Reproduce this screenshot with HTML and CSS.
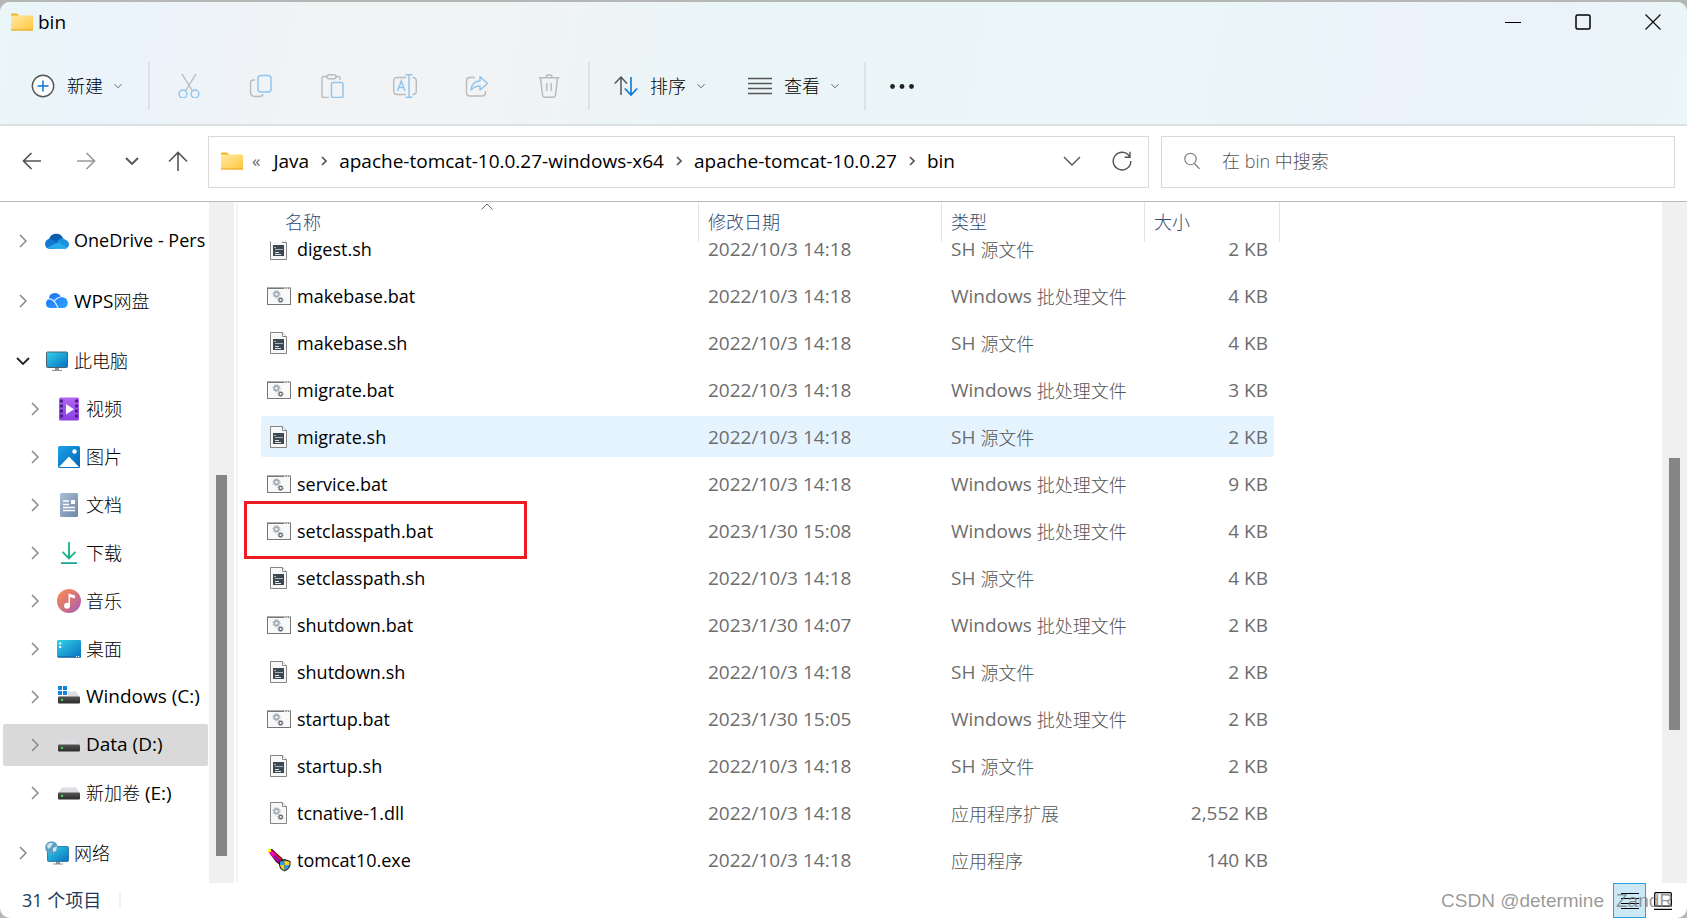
FILE: index.html
```html
<!DOCTYPE html>
<html lang="zh-CN">
<head>
<meta charset="utf-8">
<title>bin</title>
<link rel="stylesheet" href="styles.css">
</head>
<body>
<svg class="defs" aria-hidden="true">
  <defs>
    <linearGradient id="gFolder" x1="0" y1="0" x2="1" y2="1"><stop offset="0" stop-color="#ffe9a6"/><stop offset="1" stop-color="#ffc73a"/></linearGradient>
    <linearGradient id="gScreen" x1="0" y1="0" x2="1" y2="1"><stop offset="0" stop-color="#33d3e8"/><stop offset="1" stop-color="#0a6fc2"/></linearGradient>
    <linearGradient id="gVideo" x1="0" y1="0" x2="0" y2="1"><stop offset="0" stop-color="#b565f0"/><stop offset="1" stop-color="#8a3fe0"/></linearGradient>
    <linearGradient id="gPic" x1="0" y1="0" x2="1" y2="1"><stop offset="0" stop-color="#1ba2ea"/><stop offset="1" stop-color="#0563b4"/></linearGradient>
    <linearGradient id="gDoc" x1="0" y1="0" x2="1" y2="1"><stop offset="0" stop-color="#a9bfd6"/><stop offset="1" stop-color="#6c86a4"/></linearGradient>
    <linearGradient id="gMusic" x1="0" y1="0" x2="1" y2="1"><stop offset="0.1" stop-color="#f28c55"/><stop offset="0.6" stop-color="#cf6d86"/><stop offset="1" stop-color="#9b5fc0"/></linearGradient>
    <linearGradient id="gDown" x1="0" y1="0" x2="0" y2="1"><stop offset="0" stop-color="#2fc98a"/><stop offset="1" stop-color="#12a594"/></linearGradient>
    <linearGradient id="gDrive" x1="0" y1="0" x2="0" y2="1"><stop offset="0" stop-color="#555"/><stop offset="1" stop-color="#2c2c2c"/></linearGradient>
    <linearGradient id="gWps" x1="0" y1="0" x2="1" y2="1"><stop offset="0" stop-color="#1f6ff5"/><stop offset="1" stop-color="#2ea4ff"/></linearGradient>
    <symbol id="folder" viewBox="0 0 22 18"><path d="M0 1.5Q0 .5 1 .5H6L8 2.5V6H0Z" fill="#f5b11c"/><rect y="2.5" width="22" height="15" rx=".6" fill="url(#gFolder)"/><path d="M0 17h22" stroke="#e5a523"/></symbol>
    <symbol id="down" viewBox="0 0 8 8"><path d="M.5 2.2 4 5.8 7.5 2.2" fill="none" stroke="currentColor"/></symbol>
    <symbol id="right" viewBox="0 0 8 14"><path d="M1 1 7 7 1 13" fill="none" stroke="currentColor" stroke-width="1.5"/></symbol>
    <symbol id="open" viewBox="0 0 14 8"><path d="M1 1 7 7 13 1" fill="none" stroke="currentColor" stroke-width="1.8"/></symbol>
    <symbol id="crumb" viewBox="0 0 6 10"><path d="M1 1 5 5 1 9" fill="none" stroke="currentColor" stroke-width="1.7"/></symbol>
    <symbol id="drive" viewBox="0 0 24 24"><path d="M5 6.5H19L23 12H1Z" fill="#dcdee2"/><rect x="1" y="11.5" width="22" height="7" rx="1" fill="url(#gDrive)"/><rect x="4" y="14" width="2" height="2" fill="#3ee03e"/></symbol>
    <symbol id="gears" viewBox="0 0 12 13"><circle cx="4.5" cy="4.2" r="2.2" fill="none" stroke="#a2adb8" stroke-width="1.8"/><circle cx="4.5" cy="4.2" r="3.6" fill="none" stroke="#a2adb8" stroke-dasharray="1.4 1.4"/><circle cx="8.6" cy="10" r="1.7" fill="none" stroke="#626b75" stroke-width="1.2"/><circle cx="8.6" cy="10" r="2.6" fill="none" stroke="#626b75" stroke-width=".8" stroke-dasharray="1 1"/></symbol>
    <symbol id="bat" viewBox="0 0 24 24"><rect x=".5" y="4.500" width="23" height="16" fill="#f9f9f9" stroke="#777"/><path d="M0 4.2H24" stroke="#777" stroke-width="1.6"/><path d="M17 4.3h1.4M19.5 4.3h1.4M22 4.3h1" stroke="#fff" stroke-width="1"/><use href="#gears" x="5" y="6" width="12" height="13"/></symbol>
    <symbol id="page" viewBox="0 0 24 24"><path d="M3.5 1.5H15.5L19.5 5.5V22.5H3.5Z" fill="#f8f8f8" stroke="#858585"/><path d="M15.5 1.5V5.5H19.5" fill="#fff" stroke="#858585"/></symbol>
    <symbol id="sh" viewBox="0 0 24 24"><use href="#page"/><rect x="6" y="8" width="11" height="11" fill="#3b4a52"/><path d="M7 10.500h2M8 12.500h8" stroke="#aab3b8"/><path d="M8 15.500h4M8 17.500h6" stroke="#dfe3e5"/></symbol>
    <symbol id="dll" viewBox="0 0 24 24"><use href="#page"/><use href="#gears" x="5" y="6" width="12" height="13"/></symbol>
    <symbol id="exe" viewBox="0 0 24 24"><path d="M1 1H5L15 10 18 14 14 18 9 14 3 6Z" fill="#3a0a20"/><path d="M3 3 8.500 9 15 15" fill="none" stroke="#ff00c8" stroke-width="3.600"/><path d="M6.500 4 14 11.500" fill="none" stroke="#e8141c" stroke-width="1.400"/><path d="M7 7.500 14 14" fill="none" stroke="#3a18a0" stroke-width="1.200"/><path d="M1 1H4V4H1Z" fill="#ff0"/><path d="M17.5 11 23.500 13V17Q22.500 21.500 17.5 23.500 12.500 21.500 12 17V13Z" fill="#222"/><path d="M17.5 12.500V17H13V13.800Z" fill="#2d9be8"/><path d="M17.5 12.500 22.500 13.800V17H17.5Z" fill="#ffd21a"/><path d="M13 17H17.5V22.500Q14 21 13 17Z" fill="#ffd21a"/><path d="M17.5 17H22.500Q21.500 21 17.5 22.500Z" fill="#2d9be8"/></symbol>
  </defs>
</svg>

<div class="window">
  <header class="chrome">
    <div class="titlebar">
      <svg class="folder"><use href="#folder"/></svg>
      <span class="latin title">bin</span>
      <div class="caption">
        <button aria-label="最小化"><svg viewBox="0 0 16 16"><path d="M0 8.500H16" stroke="#000"/></svg></button>
        <button aria-label="最大化"><svg viewBox="0 0 16 16"><rect x="1" y="1" width="14" height="14" rx="1.500" stroke="#000" stroke-width="1.500"/></svg></button>
        <button aria-label="关闭"><svg viewBox="0 0 16 16"><path d="M.5.5 15.500 15.500M15.500.5.5 15.500" stroke="#111" stroke-width="1.300"/></svg></button>
      </div>
    </div>
    <div class="toolbar">
      <button class="tool tool-new"><svg class="ico" viewBox="0 0 24 24"><circle cx="12" cy="12" r="10.700" stroke="#555" stroke-width="1.400" fill="#fcfcfc"/><path d="M12 6.500V17.500M6.500 12H17.500" stroke="#0a78d4" stroke-width="1.500"/></svg><span>新建</span><svg class="mini"><use href="#down"/></svg></button>
      <i class="sep"></i>
      <div class="tools-off">
        <button aria-label="剪切" disabled><svg class="ico" viewBox="0 0 24 24"><path d="M5 0 15.500 17M19 0 8.500 17" stroke="#b9bcbf" stroke-width="1.400"/><circle cx="6" cy="20" r="3.900" stroke="#93c6ec" stroke-width="1.500"/><circle cx="18" cy="20" r="3.900" stroke="#93c6ec" stroke-width="1.500"/></svg></button>
        <button aria-label="复制" disabled><svg class="ico" viewBox="0 0 24 24"><path d="M6 6H5Q1.500 6 1.500 9V18Q1.500 22.500 6 22.500H10.500Q13.500 22.500 14 20" stroke="#b9bcbf" stroke-width="1.400"/><rect x="9" y="1.500" width="13" height="16.500" rx="3" stroke="#93c6ec" stroke-width="1.500"/></svg></button>
        <button aria-label="粘贴" disabled><svg class="ico" viewBox="0 0 24 24"><path d="M6 2.500H2.500Q1 2.500 1 4V22Q1 23.500 2.500 23.500H8M15 2.500H18Q19 2.500 19 4V6" stroke="#b9bcbf" stroke-width="1.400"/><rect x="6" y=".8" width="9" height="4" rx="2" stroke="#b9bcbf" stroke-width="1.400"/><rect x="10.500" y="8.500" width="11.500" height="15" rx="1.500" stroke="#93c6ec" stroke-width="1.500"/></svg></button>
        <button aria-label="重命名" disabled><svg class="ico" viewBox="0 0 24 24"><path d="M13 3.500H4Q.7 3.500.7 7V17Q.7 20.500 4 20.500H13M19.500 3.500Q23.300 3.500 23.300 7V17Q23.300 20.500 19.500 20.500" stroke="#b9bcbf" stroke-width="1.400"/><path d="M4.500 17 8.300 7 12 17M5.800 13.500H10.700M12.500.8H19.500M12.500 23.200H19.500M16 1V23" stroke="#93c6ec" stroke-width="1.500"/></svg></button>
        <button aria-label="共享" disabled><svg class="ico" viewBox="0 0 24 24"><path d="M10 3.500H5Q1.500 3.500 1.500 7V18.500Q1.500 22 5 22H17Q20.500 22 20.500 18.500V17" stroke="#b9bcbf" stroke-width="1.400"/><path d="M15 2.500 22.500 9.500 15 16V12Q9.500 12 6 16 6.500 8 15 6.800Z" stroke="#93c6ec" stroke-width="1.500" stroke-linejoin="round"/></svg></button>
        <button aria-label="删除" disabled><svg class="ico" viewBox="0 0 24 24"><path d="M1.500 3.700H22.500M9 3.500Q9 .8 12 .8T15 3.500M3.500 4 5.500 21Q5.800 23.300 8 23.300H16Q18.200 23.300 18.500 21L20.500 4M9.800 9V17M14.200 9V17" stroke="#b9bcbf" stroke-width="1.500"/></svg></button>
      </div>
      <i class="sep"></i>
      <button class="tool tool-sort"><svg class="ico" viewBox="0 0 24 24"><path d="M7 21V3M.8 9.500 7 3 13 9.500" stroke="#555" stroke-width="1.500"/><path d="M17 3V21M10.800 14.500 17 21 23.200 14.500" stroke="#0a78d4" stroke-width="1.600"/></svg><span>排序</span><svg class="mini"><use href="#down"/></svg></button>
      <button class="tool tool-view"><svg class="ico" viewBox="0 0 24 24"><path d="M0 4.500H24M0 9.500H24M0 14.500H24M0 19.500H24" stroke="#555" stroke-width="1.300"/></svg><span>查看</span><svg class="mini"><use href="#down"/></svg></button>
      <i class="sep"></i>
      <button class="more" aria-label="更多"><svg class="ico" viewBox="0 0 24 24"><g fill="#222"><circle cx="2.500" cy="12.500" r="2.400"/><circle cx="12" cy="12.500" r="2.400"/><circle cx="21.500" cy="12.500" r="2.400"/></g></svg></button>
    </div>
  </header>

  <nav class="navbar">
    <div class="arrows">
      <button aria-label="后退"><svg viewBox="0 0 20 20"><path d="M19 10H1.500M9.500 2 1.500 10 9.500 18" stroke="#555" stroke-width="1.700"/></svg></button>
      <button aria-label="前进"><svg viewBox="0 0 20 20"><path d="M1 10H18.500M10.500 2 18.500 10 10.500 18" stroke="#999" stroke-width="1.700"/></svg></button>
      <button class="recent" aria-label="最近浏览的位置"><svg viewBox="0 0 14 20"><path d="M1 7 7 13 13 7" stroke="#555" stroke-width="1.900"/></svg></button>
      <button aria-label="上移"><svg viewBox="0 0 20 20"><path d="M10 20V1.500M1 10.500 10 1.500 19 10.500" stroke="#555" stroke-width="1.600"/></svg></button>
    </div>
    <div class="address latin">
      <svg class="folder"><use href="#folder"/></svg>
      <span class="laquo">«</span>
      <a href="#java">Java</a><svg class="crumb"><use href="#crumb"/></svg>
      <a href="#win">apache-tomcat-10.0.27-windows-x64</a><svg class="crumb"><use href="#crumb"/></svg>
      <a href="#tomcat">apache-tomcat-10.0.27</a><svg class="crumb"><use href="#crumb"/></svg>
      <a href="#bin">bin</a>
      <button class="history" aria-label="以前的位置"><svg viewBox="0 0 18 20"><path d="M1 6 9 14 17 6" stroke="#555" stroke-width="1.400"/></svg></button>
      <button class="refresh" aria-label="刷新"><svg viewBox="0 0 20 20"><path d="M17.500 5.500A8.800 8.800 0 1 0 18.800 10M18 .8V6.200H12.600" stroke="#555" stroke-width="1.400"/></svg></button>
    </div>
    <label class="search">
      <svg viewBox="0 0 16 18"><circle cx="6.500" cy="7" r="5.700" stroke="#777" stroke-width="1.100"/><path d="M10.500 11.500 15.500 16.800" stroke="#777" stroke-width="1.200"/></svg>
      <input type="text" placeholder="在 bin 中搜索" aria-label="在 bin 中搜索">
    </label>
  </nav>

  <div class="content">
    <aside class="sidebar">
      <a class="node root latin small" href="#od"><svg class="tw"><use href="#right"/></svg><svg class="i24" viewBox="0 0 24 24"><path d="M5 19.500A5 5 0 0 1 4 10 7.500 7.500 0 0 1 18 9L20 19.500Z" fill="#0a5cad"/><path d="M0 15Q.5 10 5.500 9.800L15 15 10 19.700H4.500Q.3 19.500 0 15Z" fill="#1177d1"/><path d="M12 12Q16 7.500 20 10.500 24 12 24 15.500 23.500 19.600 19.500 19.700L13 17Z" fill="#1a90e2"/><path d="M2 19Q10 14 14 13.500L22.500 18.500Q21 19.700 19.500 19.700H5Q3 19.700 2 19Z" fill="#29a9ea"/></svg><span>OneDrive - Pers</span></a>
      <a class="node root latin" href="#wps"><svg class="tw"><use href="#right"/></svg><svg class="i24" viewBox="0 0 24 24"><path d="M6 19Q1 19 1 14.500 1 11 4 10 4 4 10 4 14 4 16 8 22.500 8 22.800 14 22.500 19 18 19Z" fill="url(#gWps)"/><path d="M3 10Q9 9 13 19M16 8Q11 9 9.500 12" fill="none" stroke="#d8eaff" stroke-width="1.200"/></svg><span>WPS<span class="cjk">网盘</span></span></a>
      <a class="node root" href="#pc"><svg class="tw open"><use href="#open"/></svg><svg class="i24" viewBox="0 0 24 24"><path d="M10 19h4v2h3v1H7v-1h3z" fill="#8d9499"/><rect x="1.500" y="3" width="21" height="15.500" rx="1" fill="url(#gScreen)" stroke="#4b6170"/></svg><span>此电脑</span></a>
      <div class="children">
        <a class="node" href="#v"><svg class="tw"><use href="#right"/></svg><svg class="i24" viewBox="0 0 24 24"><rect x="2" y=".5" width="20" height="23" rx="1.500" fill="url(#gVideo)"/><path d="M4.500 2.500V22M19.500 2.500V22" stroke="#4a1f92" stroke-width="3" stroke-dasharray="3 2"/><path d="M9 7V17.500L17 12.200Z" fill="#fff"/></svg><span>视频</span></a>
        <a class="node" href="#p"><svg class="tw"><use href="#right"/></svg><svg class="i24" viewBox="0 0 24 24"><rect x="1" y="1" width="22" height="22" rx="1.500" fill="url(#gPic)"/><path d="M2 22 12 11.500 22 22Z" fill="#fff"/><circle cx="17.500" cy="6.500" r="2.200" fill="#fff"/></svg><span>图片</span></a>
        <a class="node" href="#d"><svg class="tw"><use href="#right"/></svg><svg class="i24" viewBox="0 0 24 24"><rect x="3" y="0" width="18" height="24" rx="1.500" fill="url(#gDoc)"/><path d="M6 8H12M6 11.500H12M6 14.500H18M6 17.500H18" stroke="#fff" stroke-width="1.300"/><rect x="14" y="7" width="4" height="4" fill="#fff"/></svg><span>文档</span></a>
        <a class="node" href="#dl"><svg class="tw"><use href="#right"/></svg><svg class="i24" viewBox="0 0 24 24"><path d="M11 1H13V15L17.800 10.200 19.200 11.600 12 18.800 4.800 11.600 6.200 10.200 11 15ZM4 21.200H20V23H4Z" fill="url(#gDown)"/></svg><span>下载</span></a>
        <a class="node" href="#m"><svg class="tw"><use href="#right"/></svg><svg class="i24" viewBox="0 0 24 24"><circle cx="12" cy="12" r="12" fill="url(#gMusic)"/><circle cx="10" cy="16.800" r="3" fill="#fff"/><path d="M11.500 4.500 18 6.500V9.500L13 8V17H11.500Z" fill="#fff"/></svg><span>音乐</span></a>
        <a class="node" href="#dt"><svg class="tw"><use href="#right"/></svg><svg class="i24" viewBox="0 0 24 24"><rect y="3" width="24" height="17.500" rx="1.200" fill="url(#gScreen)"/><path d="M2.200 5.500h2v2h-2zM2.200 9h2v2h-2z" fill="#fff"/><path d="M1 20H24" stroke="#0c4f93"/><path d="M19 19.500h1.200M21.200 19.500h1.200" stroke="#fff"/></svg><span>桌面</span></a>
        <a class="node latin" href="#c"><svg class="tw"><use href="#right"/></svg><svg class="i24" viewBox="0 0 24 24"><use href="#drive"/><rect width="11" height="11" x="0" y="0" fill="#fff"/><path d="M1 1h4v4H1zM6 1h4v4H6zM1 6h4v4H1zM6 6h4v4H6z" fill="#0f86d8"/></svg><span>Windows (C:)</span></a>
        <a class="node latin selected" href="#data"><svg class="tw"><use href="#right"/></svg><svg class="i24"><use href="#drive"/></svg><span>Data (D:)</span></a>
        <a class="node latin" href="#e"><svg class="tw"><use href="#right"/></svg><svg class="i24"><use href="#drive"/></svg><span><span class="cjk">新加卷</span> (E:)</span></a>
      </div>
      <a class="node root" href="#net"><svg class="tw"><use href="#right"/></svg><svg class="i24" viewBox="0 0 24 24"><path d="M11 20h4v2.500h3v1H8v-1h3z" fill="#8d9499"/><rect x="2.500" y="5.500" width="21" height="15" rx="1" fill="url(#gScreen)" stroke="#3c7ea8"/><circle cx="6.500" cy="6.500" r="6.300" fill="#5b9fc4"/><path d="M2 4Q5 1 8 2L6 6 3 8ZM8 7 12 5 11 10 8 11Z" fill="#cfe6f1"/></svg><span>网络</span></a>
    </aside>
    <div class="scroll side-scroll"><i class="thumb"></i></div>
    <main class="files">
      <table>
        <thead><tr><th>名称<svg class="caret" viewBox="0 0 12 7"><path d="M.5 6.500 6 1 11.500 6.500" fill="none" stroke="#666"/></svg></th><th>修改日期</th><th>类型</th><th>大小</th></tr></thead>
        <tbody>
          <tr class="cut"><td><svg class="i24"><use href="#sh"/></svg>digest.sh</td><td>2022/10/3 14:18</td><td>SH <span class="cjk">源文件</span></td><td>2 KB</td></tr>
          <tr><td><svg class="i24"><use href="#bat"/></svg>makebase.bat</td><td>2022/10/3 14:18</td><td>Windows <span class="cjk">批处理文件</span></td><td>4 KB</td></tr>
          <tr><td><svg class="i24"><use href="#sh"/></svg>makebase.sh</td><td>2022/10/3 14:18</td><td>SH <span class="cjk">源文件</span></td><td>4 KB</td></tr>
          <tr><td><svg class="i24"><use href="#bat"/></svg>migrate.bat</td><td>2022/10/3 14:18</td><td>Windows <span class="cjk">批处理文件</span></td><td>3 KB</td></tr>
          <tr class="hover"><td><svg class="i24"><use href="#sh"/></svg>migrate.sh</td><td>2022/10/3 14:18</td><td>SH <span class="cjk">源文件</span></td><td>2 KB</td></tr>
          <tr><td><svg class="i24"><use href="#bat"/></svg>service.bat</td><td>2022/10/3 14:18</td><td>Windows <span class="cjk">批处理文件</span></td><td>9 KB</td></tr>
          <tr class="marked"><td><svg class="i24"><use href="#bat"/></svg>setclasspath.bat</td><td>2023/1/30 15:08</td><td>Windows <span class="cjk">批处理文件</span></td><td>4 KB</td></tr>
          <tr><td><svg class="i24"><use href="#sh"/></svg>setclasspath.sh</td><td>2022/10/3 14:18</td><td>SH <span class="cjk">源文件</span></td><td>4 KB</td></tr>
          <tr><td><svg class="i24"><use href="#bat"/></svg>shutdown.bat</td><td>2023/1/30 14:07</td><td>Windows <span class="cjk">批处理文件</span></td><td>2 KB</td></tr>
          <tr><td><svg class="i24"><use href="#sh"/></svg>shutdown.sh</td><td>2022/10/3 14:18</td><td>SH <span class="cjk">源文件</span></td><td>2 KB</td></tr>
          <tr><td><svg class="i24"><use href="#bat"/></svg>startup.bat</td><td>2023/1/30 15:05</td><td>Windows <span class="cjk">批处理文件</span></td><td>2 KB</td></tr>
          <tr><td><svg class="i24"><use href="#sh"/></svg>startup.sh</td><td>2022/10/3 14:18</td><td>SH <span class="cjk">源文件</span></td><td>2 KB</td></tr>
          <tr><td><svg class="i24"><use href="#dll"/></svg>tcnative-1.dll</td><td>2022/10/3 14:18</td><td><span class="cjk">应用程序扩展</span></td><td>2,552 KB</td></tr>
          <tr><td><svg class="i24"><use href="#exe"/></svg>tomcat10.exe</td><td>2022/10/3 14:18</td><td><span class="cjk">应用程序</span></td><td>140 KB</td></tr>
        </tbody>
      </table>
    </main>
    <div class="scroll main-scroll"><i class="thumb"></i></div>
  </div>

  <footer class="status">
    <span class="count">31 个项目</span>
    <div class="views">
      <button class="view active" aria-label="详细信息"><svg viewBox="0 0 18 18"><path d="M0 1.500H18M0 6.500H18M0 11.500H18M0 16.500H18" stroke="#000"/></svg></button>
      <button class="view" aria-label="大图标"><svg viewBox="0 0 18 18"><rect x=".7" y=".7" width="16.600" height="13.500" rx="1" stroke="#000" stroke-width="1.300"/><path d="M0 17.300H18" stroke="#000" stroke-width="1.300"/></svg></button>
    </div>
    <div class="watermark"><span>CSDN @determine</span><span>ZandR</span></div>
  </footer>
</div>
</body>
</html>
```

FILE: styles.css
```css
*, *::before, *::after { box-sizing: border-box; }
body {
  margin: 0;
  height: 100vh;
  padding-top: 2px;
  background: #b5b6b6;
  font-family: "Noto Sans CJK SC", sans-serif;
  font-size: 18px;
  font-weight: 300;
  line-height: 24px;
  color: #000;
}
button { border: 0; padding: 0; background: none; font: inherit; color: inherit; display: flex; align-items: center; }
a { color: inherit; text-decoration: none; }
svg { display: block; flex: none; fill: none; }
.defs { position: absolute; width: 0; height: 0; }
.latin { font-family: "Open Sans", "Noto Sans CJK SC", sans-serif; font-size: 19px; font-weight: 400; }
.latin.small { font-size: 18px; }
.cjk { font-size: 18px; font-weight: 300; font-family: "Noto Sans CJK SC", sans-serif; }
.i24, .ico { width: 24px; height: 24px; }
.folder { width: 22px; height: 18px; }

.window {
  height: 100%;
  display: flex;
  flex-direction: column;
  background: #fff;
  border-radius: 10px;
  overflow: hidden;
}

.chrome {
  border-bottom: 2px solid #dae2e4;
  background: linear-gradient(100deg, #eaf6f8 0, #ebf3fb 8%, #f1f3f5 18%, #f1f3f5 30%, #eaf5f7 42%, #eaf6f7 70%, #ecf3fb 82%, #ebf3fa 92%, #eaf6f7 100%);
}
.titlebar { display: flex; align-items: center; height: 40px; padding: 0 26px 0 11px; }
.title { margin-left: 5px; }
.caption { display: flex; gap: 54px; margin-left: auto; }
.caption svg { width: 16px; height: 16px; }
.toolbar { display: flex; align-items: center; height: 82px; padding: 6px 31px 0; }
.sep { width: 2px; height: 48px; background: #dde3e6; }
.tool span { margin: 0 11px 0 12px; padding-bottom: 2px; }
.mini { width: 8px; height: 8px; color: #666; }
.tool-new { margin-right: 26px; }
.tools-off { display: flex; gap: 48px; margin: 0 27px; }
.tool-sort { margin: 0 43px 0 24px; }
.tool-view { margin-right: 25px; }
.more { margin-left: 24px; }

.navbar {
  display: flex;
  align-items: center;
  gap: 12px;
  height: 76px;
  padding: 0 12px 3px 22px;
  border-bottom: 1px solid #bbb;
}
.arrows { display: flex; align-items: center; gap: 29px; width: 174px; flex: none; padding-bottom: 2px; }
.arrows svg { width: 20px; height: 20px; }
.arrows .recent svg { width: 14px; }
.arrows button:first-child { margin-right: 5px; }
.address, .search { display: flex; align-items: center; height: 52px; border: 1px solid #d9d9d9; padding-bottom: 2px; }
.address { flex: 911; min-width: 0; padding-left: 12px; padding-right: 16px; white-space: nowrap; }
.search { flex: 490; min-width: 0; padding-left: 22px; }
.laquo { margin: 0 13px 0 9px; font-size: 17px; color: #666; }
.crumb { width: 6px; height: 10px; margin: 0 12px; color: #555; }
.history { margin-left: auto; }
.history svg { width: 18px; height: 20px; }
.refresh { margin-left: 31px; }
.refresh svg { width: 20px; height: 20px; }
.search svg { width: 16px; height: 18px; }
.search input {
  flex: 1;
  min-width: 0;
  margin-left: 22px;
  padding: 0;
  border: 0;
  outline: 0;
  background: none;
  font: 300 18px/24px "Open Sans", "Noto Sans CJK SC", sans-serif;
}
.search input::placeholder { color: #555; opacity: 1; }

.content { flex: 1; min-height: 0; display: flex; }
.sidebar {
  width: 209px;
  flex: none;
  display: flex;
  flex-direction: column;
  gap: 12px;
  padding: 15px 1px 0 3px;
  overflow: hidden;
}
.children { margin-top: -12px; }
.node { display: flex; align-items: center; height: 48px; padding-left: 28px; white-space: nowrap; flex: none; }
.root { padding-left: 16px; }
.node .i24 { margin: 0 5px 0 18px; }
.node > span { padding-bottom: 2px; }
.tw { width: 8px; height: 14px; color: #888; }
.tw.open { width: 14px; height: 8px; margin: 0 -3px; color: #222; }
.node.selected { height: 42px; margin: 3px 0; background: #d9d9d9; border-radius: 2px; }

.scroll { width: 25px; flex: none; background: #f0f0f0; }
.thumb { display: block; width: 11px; margin-left: 7px; background: #858585; }
.side-scroll .thumb { height: 56%; margin-top: 273px; }
.main-scroll .thumb { height: 40%; margin-top: 256px; }

.files { flex: 1; min-width: 0; overflow: hidden; margin-left: 2px; border-left: 2px solid #f6f6f6; padding-left: 23px; }
table, thead { display: block; }
tbody { display: flex; flex-direction: column; gap: 6px; }
tr { display: grid; grid-template-columns: 438px 243px 203px 135px; width: 1019px; }
th, td { display: flex; align-items: center; padding: 0; text-align: left; white-space: nowrap; }
th { position: relative; height: 40px; padding: 0 0 2px 9px; border-right: 1px solid #e3e3e3; font-weight: 300; color: #304a70; }
th:first-child { padding-left: 24px; }
.caret { position: absolute; top: 1px; left: 50%; margin-left: 1px; width: 12px; height: 7px; }
tbody tr { position: relative; width: 1013px; grid-template-columns: 438px 243px 203px 129px; border-radius: 2px; }
td { height: 41px; padding-left: 9px; font-family: "Open Sans", "Noto Sans CJK SC", sans-serif; font-size: 19px; font-weight: 400; color: #6d6d6d; white-space: pre; }
td .cjk { color: #555; }
td:first-child { padding-left: 6px; font-size: 18px; color: #000; }
td:first-child .i24 { margin-right: 6px; }
td:last-child { justify-content: flex-end; padding: 0 6px 0 0; }
.cut { height: 27px; align-content: end; }
.cut .i24 { clip-path: inset(5px 0 0 0); }
.hover { background: #e5f3ff; }
.marked::after { content: ""; position: absolute; top: -9px; left: -17px; width: 283px; height: 58px; border: 3px solid #ed1c24; }

.status { position: relative; display: flex; align-items: center; height: 35px; flex: none; padding: 0 8px 0 22px; color: #1e395b; }
.count { margin-bottom: 2px; padding-right: 18px; border-right: 2px solid #f2f2f2; line-height: 18px; font-family: "Open Sans", "Noto Sans CJK SC", sans-serif; font-weight: 400; }
.views { display: flex; margin-left: auto; }
.view { width: 33px; height: 35px; justify-content: center; }
.view.active { background: #cbe8f6; border: 1px solid #2b9fd8; }
.view svg { width: 18px; height: 18px; }
.watermark {
  position: absolute;
  right: 14px;
  top: 6px;
  display: flex;
  gap: 12px;
  font-family: "Liberation Sans", sans-serif;
  font-size: 19px;
  color: rgba(120, 120, 120, .75);
  pointer-events: none;
}
```
